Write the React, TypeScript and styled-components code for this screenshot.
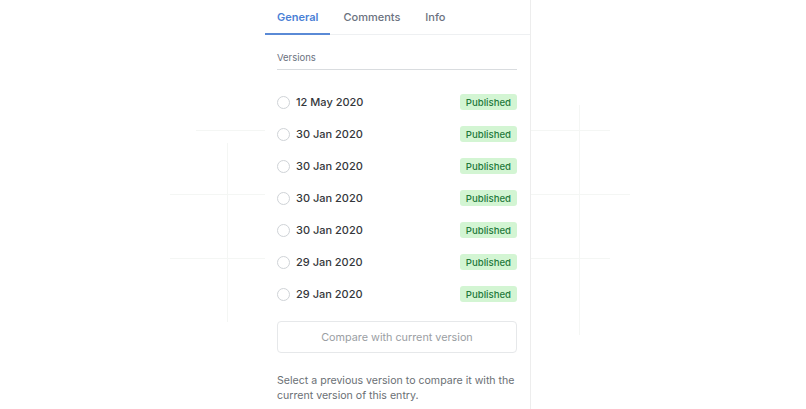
import React, { useState } from 'react';
import styled, { createGlobalStyle } from 'styled-components';

const GlobalStyle = createGlobalStyle`
  html, body {
    margin: 0;
    padding: 0;
    background: #ffffff;
    font-family: Inter, "Noto Sans", "Liberation Sans", sans-serif;
    -webkit-font-smoothing: antialiased;
  }
`;

const Page = styled.div`
  position: relative;
  width: 806px;
  height: 409px;
  overflow: hidden;
  background: #fff;
`;

const Backdrop = styled.svg`
  position: absolute;
  left: 0;
  top: 0;
  width: 806px;
  height: 409px;
  pointer-events: none;
`;

const Panel = styled.aside`
  position: relative;
  margin-left: 265px;
  width: 266px;
  height: 409px;
  border-right: 1px solid #ededed;
  background: #fff;
  box-sizing: border-box;
`;

const Tabs = styled.nav`
  display: flex;
  height: 35px;
  border-bottom: 1px solid #eef0f2;
  box-sizing: border-box;
`;

const Tab = styled.button<{ $active?: boolean }>`
  appearance: none;
  background: none;
  border: none;
  margin: 0;
  padding: 0 12px;
  height: 35px;
  font-family: inherit;
  font-size: 11px;
  font-weight: ${(p) => (p.$active ? 600 : 500)};
  color: ${(p) => (p.$active ? '#4a7fd6' : '#6b7280')};
  border-bottom: 2px solid ${(p) => (p.$active ? '#5a8ad6' : 'transparent')};
  margin-bottom: -1px;
  cursor: pointer;
  & + & {
    padding-left: 13px;
  }
`;

const Body = styled.div`
  padding: 17px 13px 0 12px;
`;

const SectionLabel = styled.div`
  font-size: 9.5px;
  color: #6b7280;
  line-height: 12px;
  padding-bottom: 5px;
  border-bottom: 1px solid #d9dcdf;
`;

const List = styled.ul`
  list-style: none;
  margin: 16px 0 0;
  padding: 0;
`;

const Row = styled.li`
  display: flex;
  align-items: center;
  height: 32px;
`;

const Radio = styled.span<{ $checked?: boolean }>`
  width: 11px;
  height: 11px;
  border-radius: 50%;
  border: 1px solid ${(p) => (p.$checked ? '#4a7fd6' : '#cfd3d7')};
  box-sizing: content-box;
  margin-right: 6px;
  flex-shrink: 0;
`;

const DateText = styled.span`
  flex: 1;
  font-size: 11px;
  font-weight: 500;
  color: #34373b;
`;

const Badge = styled.span`
  display: inline-flex;
  align-items: center;
  height: 16px;
  padding: 0 6px;
  border-radius: 3px;
  background: #d3f5d3;
  color: #237a3b;
  font-size: 9.6px;
  font-weight: 500;
`;

const CompareButton = styled.button`
  display: block;
  width: 100%;
  height: 32px;
  margin-top: 11px;
  border: 1px solid #e6e8ea;
  border-radius: 4px;
  background: #fff;
  font-family: inherit;
  font-size: 10.8px;
  color: #9a9ea3;
  cursor: not-allowed;
`;

const Help = styled.p`
  margin: 20px 0 0;
  font-size: 10.6px;
  line-height: 15px;
  color: #6b7075;
`;

const versions = [
  '12 May 2020',
  '30 Jan 2020',
  '30 Jan 2020',
  '30 Jan 2020',
  '30 Jan 2020',
  '29 Jan 2020',
  '29 Jan 2020',
];

const App: React.FC = () => {
  const [tab, setTab] = useState('General');

  return (
    <>
      <GlobalStyle />
      <Page>
        <Backdrop viewBox="0 0 806 409">
          <g stroke="#f4f6f4" strokeWidth="1" fill="none">
            <line x1="196" y1="130.5" x2="265" y2="130.5" />
            <line x1="530" y1="130.5" x2="610" y2="130.5" />
            <line x1="170" y1="194.5" x2="265" y2="194.5" />
            <line x1="530" y1="194.5" x2="630" y2="194.5" />
            <line x1="170" y1="258.5" x2="265" y2="258.5" />
            <line x1="530" y1="258.5" x2="610" y2="258.5" />
            <line x1="227.5" y1="143" x2="227.5" y2="322" />
            <line x1="579.5" y1="105" x2="579.5" y2="335" />
          </g>
        </Backdrop>
        <Panel>
          <Tabs>
            {['General', 'Comments', 'Info'].map((t) => (
              <Tab key={t} $active={tab === t} onClick={() => setTab(t)}>
                {t}
              </Tab>
            ))}
          </Tabs>
          <Body>
            <SectionLabel>Versions</SectionLabel>
            <List>
              {versions.map((d, i) => (
                <Row key={i}>
                  <Radio />
                  <DateText>{d}</DateText>
                  <Badge>Published</Badge>
                </Row>
              ))}
            </List>
            <CompareButton disabled>Compare with current version</CompareButton>
            <Help>
              Select a previous version to compare it with the current version of this entry.
            </Help>
          </Body>
        </Panel>
      </Page>
    </>
  );
};

export default App;
